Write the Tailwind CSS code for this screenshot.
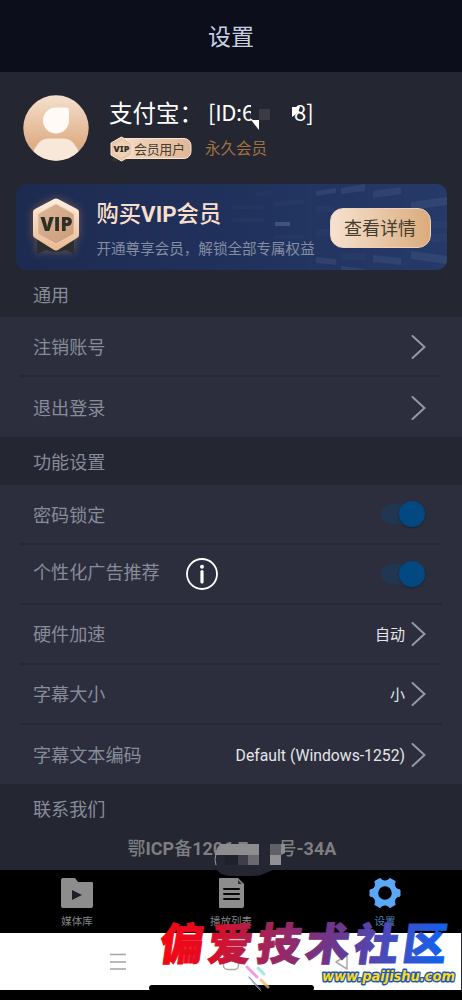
<!DOCTYPE html>
<html lang="zh-CN">
<head>
<meta charset="utf-8">
<meta name="viewport" content="width=device-width, initial-scale=1">
<title>设置</title>
<script src="https://cdn.jsdelivr.net/npm/@tailwindcss/browser@4"></script>
</head>
<body class="bg-black">
<div class="relative flex h-[1000px] w-[462px] flex-col overflow-hidden bg-[#242632] font-['Roboto','Noto_Sans_CJK_SC',sans-serif] text-[18.100px] text-[#868c99]">
  <header class="flex h-[72px] shrink-0 items-center justify-center bg-[#0c0e1b] pt-[4px] text-[23px] text-[#c9cee0]">设置</header>

  <section class="flex h-[112px] shrink-0 pl-[23px] pt-[23px]">
    <svg class="h-[66px] w-[66px] shrink-0" viewBox="0 0 66 66">
      <defs>
        <linearGradient id="av" x1="0" y1="0" x2="0" y2="1"><stop offset="0" stop-color="#f5e0cd"/><stop offset=".75" stop-color="#dfae87"/><stop offset="1" stop-color="#dfae87"/></linearGradient>
        <clipPath id="avc"><circle cx="33" cy="33" r="32.7"/></clipPath>
      </defs>
      <circle cx="33" cy="33" r="32.7" fill="url(#av)"/>
      <path d="M33 12.500h10q3 0 3 3v10A13 13 0 1 1 33 12.500Z" fill="#fffaf5"/>
      <path clip-path="url(#avc)" d="M10 66V58Q15 43.500 26 43.500H40Q51 43.500 56 58V66Z" fill="#f8e8da"/>
    </svg>
    <div class="flex flex-col pl-[20px]">
      <div class="flex h-[38px] items-center whitespace-nowrap text-white">
        <span class="w-[99px] pt-[1px] text-[23.500px]">支付宝：</span>
        <span class="w-[43px] pb-[5px] font-['Noto_Sans_CJK_SC',sans-serif] text-[22px] tracking-[-0.3px]">[ID:6</span>
        <svg class="relative h-[34px] w-[43px] shrink-0" viewBox="0 0 43 34">
          <path d="M0 5h6v17H0z" fill="#242632"/><path d="M0 23h8v10Z" fill="#fff"/><path d="M8 12h11v11H8Z" fill="#3a3b45"/>
        </svg>
        <span class="relative pb-[5px] font-['Noto_Sans_CJK_SC',sans-serif] text-[22px]">8]<span class="absolute left-[-2px] top-[12px] h-[10px] w-[8px] bg-white [clip-path:polygon(0_0,100%_0,70%_60%,0_100%)]"></span></span>
      </div>
      <div class="flex h-[32px] items-center text-[15px]">
        <svg class="h-[26px] w-[84px]" viewBox="0 0 84 26">
          <defs><linearGradient id="gold" x1="0" y1="0" x2="1" y2="0"><stop offset="0" stop-color="#f6ddc7"/><stop offset="1" stop-color="#dfb796"/></linearGradient></defs>
          <path d="M4 20v6l5-2 5 2 5-2v-4Z" fill="#353426"/>
          <rect x="5" y="2.500" width="77" height="20" rx="7" fill="url(#gold)" stroke="#fae5d3"/>
          <path d="M12.500 1 23 7v12L12.500 25 2 19V7Z" fill="#e8c6aa" stroke="#fae9dc" stroke-linejoin="round"/>
          <path d="M12.500 4 20.500 8.500v9L12.500 22 4.500 17.500v-9Z" fill="#eed1b9"/>
          <text x="4.500" y="16" font-size="9.500" font-weight="900" fill="#343026" textLength="16" lengthAdjust="spacingAndGlyphs" font-family="Noto Sans, sans-serif">VIP</text>
          <text x="25" y="18" font-size="13" fill="#493f32" textLength="51" font-family="Noto Sans CJK SC, sans-serif">会员用户</text>
        </svg>
        <span class="pl-[12px] pt-[1px] text-[15.500px] text-[#9e7143]">永久会员</span>
      </div>
    </div>
  </section>

  <section class="relative ml-[15.500px] flex h-[86px] w-[431px] shrink-0 items-center overflow-hidden rounded-[10px] bg-gradient-to-r from-[#1e2b50] via-[#20315c] to-[#263a69]">
    <svg class="absolute inset-0 h-full w-full" viewBox="0 0 431 86" fill="#7080a4">
      <path fill-opacity=".4" d="M259 38h15v4h-15z"/>
      <path fill-opacity=".17" d="M300 7l20-3v5l-20 3zM325 4l24-4v7l-24 3zM357 7l28-4v7l-28 4zM395 18l36-5v8l-36 5zM300 73l20 2v6l-20-2zM325 82l24 3v3h-24zM357 71l28 3v7l-28-3zM395 67l36 5v8l-36-5z"/>
      <path fill-opacity=".05" d="M240 8l15-2v5l-15 2zM258 18l30-3v5l-30 3zM300 22h18v6h-18zM300 45h18v7h-18zM325 69h25v7h-25zM357 56h28v7h-28zM357 24h28v5h-28zM395 37h36v7h-36zM395 50h36v8h-36zM258 51h30v4h-30zM258 64h30v5h-30zM216 21h32v4h-32zM216 34h32v4h-32z"/>
      <path stroke="#6074a5" stroke-opacity=".05" d="M295 0v86M322 0v86M353 0v86M390 0v86"/>
    </svg>
    <svg class="relative ml-[14.500px] mt-[1px] h-[62px] w-[52px] shrink-0 drop-shadow-[0_0_4px_#b27e5a88]" viewBox="0 0 52 62">
      <defs><linearGradient id="medal" x1="0" y1="0" x2="0" y2="1"><stop stop-color="#fff0df"/><stop offset="1" stop-color="#e8b98f"/></linearGradient><linearGradient id="medal2" x1="0" y1="0" x2="1" y2="1"><stop stop-color="#dcb697"/><stop offset="1" stop-color="#c99c7b"/></linearGradient></defs>
      <path d="M7 43v14l9-4 8 2h4l8-2 8 4V43Z" fill="#2b2e2d"/>
      <path d="M24 2q2-1 4 0l19 10q2 1 2 3v23q0 2-2 3L28 53q-2 1-4 0L5 41q-2-1-2-3V15q0-2 2-3Z" fill="url(#medal)"/>
      <path d="M26 7 44 17v20L26 47 8 37V17Z" fill="url(#medal2)" stroke="#edcaae"/>
      <text x="10.500" y="34" font-family="Open Sans, sans-serif" font-size="19" font-weight="800" textLength="32" lengthAdjust="spacingAndGlyphs" fill="#2e2f26">VIP</text>
    </svg>
    <div class="relative ml-[14.500px] flex flex-col whitespace-nowrap pt-[9px]">
      <span class="h-[37px] text-[22.300px] font-medium leading-[30px] text-[#f8dfcb]">购买<b>VIP</b>会员</span>
      <span class="h-[28px] text-[14.550px] leading-[28px] text-[#858da2]">开通尊享会员，解锁全部专属权益</span>
    </div>
    <div class="absolute left-[314px] top-[24px] flex h-[40px] w-[101px] items-center justify-center rounded-[13px] border border-[#edd2b9] bg-gradient-to-r from-[#f6e2d0] to-[#dbac7c] pt-[1px] text-[18px] text-[#443d30]">查看详情</div>
  </section>

  <h2 class="flex h-[47px] shrink-0 items-center px-[33px] pt-[5px]">通用</h2>
  <section class="flex h-[120px] shrink-0 flex-col bg-[#2c2e3d]">
    <div class="mx-[20px] flex h-[60px] items-center border-b-2 border-[#262836] pl-[13px] pr-[16px] pt-[2px]"><span class="flex-1 pt-[2px]">注销账号</span><svg class="h-[26px] w-[15px]" viewBox="0 0 15 26" fill="none" stroke="#9599a6" stroke-width="2" stroke-linecap="round"><path d="M1.500 2 13.500 13 1.500 24"/></svg></div>
    <div class="mx-[20px] flex h-[60px] items-center pl-[13px] pr-[16px] pt-[2px]"><span class="flex-1 pt-[2px]">退出登录</span><svg class="h-[26px] w-[15px]" viewBox="0 0 15 26" fill="none" stroke="#9599a6" stroke-width="2" stroke-linecap="round"><path d="M1.500 2 13.500 13 1.500 24"/></svg></div>
  </section>
  <h2 class="flex h-[48px] shrink-0 items-center px-[33px] pt-[4px]">功能设置</h2>
  <section class="flex h-[299px] shrink-0 flex-col bg-[#2c2e3d]">
    <div class="mx-[20px] flex h-[60px] shrink-0 items-center border-b-2 border-[#262836] pl-[13px] pr-[17px]">
      <span class="flex-1 pt-[3px]">密码锁定</span>
      <span class="flex h-[20px] w-[44px] items-center justify-end rounded-full bg-[#203651]"><span class="h-[26px] w-[26px] shrink-0 rounded-full bg-[#034981] shadow-[0_1px_2px_#171b2899]"></span></span>
    </div>
    <div class="mx-[20px] flex h-[60px] shrink-0 items-center border-b-2 border-[#262836] pl-[13px] pr-[17px]">
      <span class="pb-[3px]">个性化广告推荐</span>
      <svg class="ml-[25px] h-[34px] w-[34px]" viewBox="0 0 34 34"><circle cx="17" cy="17" r="15" fill="none" stroke="#fff" stroke-width="1.800"/><circle cx="17" cy="9.800" r="2" fill="#fff"/><path d="M17 14.500V25" stroke="#fff" stroke-width="3.200" stroke-linecap="round"/></svg>
      <span class="ml-auto flex h-[20px] w-[44px] items-center justify-end rounded-full bg-[#203651]"><span class="h-[26px] w-[26px] shrink-0 rounded-full bg-[#034981] shadow-[0_1px_2px_#171b2899]"></span></span>
    </div>
    <div class="mx-[20px] flex h-[60px] shrink-0 items-center border-b-2 border-[#262836] pl-[13px] pr-[16px]"><span class="flex-1 pt-[2px]">硬件加速</span><span class="mr-[6px] pt-[2px] text-[15px] text-[#e4e5e8]">自动</span><svg class="h-[26px] w-[15px]" viewBox="0 0 15 26" fill="none" stroke="#9599a6" stroke-width="2" stroke-linecap="round"><path d="M1.500 2 13.500 13 1.500 24"/></svg></div>
    <div class="mx-[20px] flex h-[60px] shrink-0 items-center border-b-2 border-[#262836] pl-[13px] pr-[16px]"><span class="flex-1 pt-[2px]">字幕大小</span><span class="mr-[6px] pt-[2px] text-[15px] text-[#e4e5e8]">小</span><svg class="h-[26px] w-[15px]" viewBox="0 0 15 26" fill="none" stroke="#9599a6" stroke-width="2" stroke-linecap="round"><path d="M1.500 2 13.500 13 1.500 24"/></svg></div>
    <div class="mx-[20px] flex h-[60px] shrink-0 items-center pl-[13px] pr-[16px]"><span class="flex-1 pt-[2px]">字幕文本编码</span><span class="mr-[6px] pt-[2px] text-[15.750px] text-[#e4e5e8]">Default (Windows-1252)</span><svg class="h-[26px] w-[15px]" viewBox="0 0 15 26" fill="none" stroke="#9599a6" stroke-width="2" stroke-linecap="round"><path d="M1.500 2 13.500 13 1.500 24"/></svg></div>
  </section>
  <section class="h-[86px] shrink-0">
    <h2 class="flex h-[48px] items-center px-[33px] pt-[4px]">联系我们</h2>
    <div class="relative flex h-[32px] items-center whitespace-nowrap pl-[127.500px] pt-[1px] text-[18px] font-medium text-[#7e7e80]">
      <span class="w-[151px]">鄂<b>ICP</b>备<b>1206 7</b></span><span>号<b>-34A</b></span>
      <svg class="absolute left-[213px] top-[11px] h-[36px] w-[75px]" viewBox="0 0 75 36">
        <path d="M2 12h54v9H2z" fill="#242632"/>
        <path d="M8 1h38v11H2Q3 4 8 1Z" fill="#8d8d8f"/><path d="M3 11Q1 16 3 22" stroke="#999" fill="none"/>
        <path d="M12 12h13v10H12z" fill="#20212b"/><path d="M25 12h10v10H25z" fill="#3d3e48"/><path d="M35 12h11v10H35z" fill="#69696f"/>
        <path d="M46 1h11v21H46z" fill="#242632"/><path d="M57 1h11v11H57z" fill="#5f606a"/><path d="M57 12h11v10H57z" fill="#919194"/><path d="M68 1h4v9l-4 2z" fill="#8d8d8f"/>
      </svg>
    </div>
  </section>

  <nav class="relative flex h-[63px] shrink-0 justify-between bg-black text-[10.500px] leading-[16px] text-[#858585]">
    <div class="absolute left-[217px] top-0 h-[6px] w-[56px] bg-[#242632] [clip-path:polygon(0_0,100%_0,76%_90%,60%_100%,22%_100%,8%_70%)]"></div>
    <div class="flex w-[154px] flex-col items-center gap-[5px] pt-[7px]">
      <svg class="h-[32px] w-[34px]" viewBox="0 0 34 32"><path d="M3 1h12l3 4h14q1 0 1 1v23q0 2-2 2H3q-2 0-2-2V3q0-2 2-2Z" fill="#8d8d8d"/><path d="M12 13v10l10-5Z" fill="#1d1e29"/></svg><span>媒体库</span>
    </div>
    <div class="flex w-[154px] flex-col items-center gap-[5px] pt-[7px]">
      <svg class="relative h-[32px] w-[27px]" viewBox="0 0 27 32"><path d="M2 1h18l6 6v22q0 2-2 2H2q-1 0-1-1V2q0-1 1-1Z" fill="#8d8d8d"/><path d="M20 3l4 4h-4Z" fill="#333"/><path d="M6 12h15M6 17h15M6 22h15" stroke="#080808" stroke-width="2" stroke-linecap="round"/></svg><span>播放列表</span>
    </div>
    <div class="flex w-[154px] flex-col items-center gap-[5px] pt-[7px] text-[#4c83b9]">
      <svg class="h-[32px] w-[32px]" viewBox="-16 -16 32 32">
        <circle r="9.300" fill="none" stroke="#5ba9f6" stroke-width="5"/>
        <g fill="#5ba9f6" stroke="#5ba9f6" stroke-width="1" stroke-linejoin="round">
          <path id="tooth" d="M9.500-6.500 12-4 15-3V3L12 4 9.500 6.500Z"/>
          <use href="#tooth" transform="rotate(60)"/><use href="#tooth" transform="rotate(120)"/><use href="#tooth" transform="rotate(180)"/><use href="#tooth" transform="rotate(240)"/><use href="#tooth" transform="rotate(300)"/>
        </g>
      </svg><span>设置</span>
    </div>
  </nav>
  <div class="flex h-[57px] w-[461px] shrink-0 items-center justify-between bg-white pl-[109px] pr-[113px]">
    <svg class="h-[18px] w-[18px]" viewBox="0 0 18 18" stroke="#a4a4a4" stroke-width="1.500"><path d="M1 1.500h16M1 9h16M1 16h16"/></svg>
    <svg class="h-[18px] w-[18px]" viewBox="0 0 18 18" fill="none" stroke="#aaa" stroke-width="1.500"><rect x="1.500" y="1.500" width="15" height="15" rx="4"/></svg>
    <svg class="h-[18px] w-[14px]" viewBox="0 0 14 18" fill="none" stroke="#aaa" stroke-width="1.500"><path d="M13 2v14L2 9Z" stroke-linejoin="round"/></svg>
  </div>
  <div class="h-[10px] shrink-0 bg-black"></div>
  <div class="absolute left-[149px] top-[985px] h-[6px] w-[165px] rounded-full bg-black"></div>

  <svg class="absolute left-[150px] top-[910px] h-[90px] w-[312px] overflow-visible" viewBox="0 0 312 90">
    <defs><linearGradient id="mark" gradientUnits="userSpaceOnUse" x1="10" y1="0" x2="296" y2="0"><stop offset="0" stop-color="#f80612"/><stop offset=".17" stop-color="#e30b20"/><stop offset=".35" stop-color="#ad2050"/><stop offset=".6" stop-color="#713587"/><stop offset=".8" stop-color="#4c49b8"/><stop offset="1" stop-color="#1460ed"/></linearGradient></defs>
    <g stroke-linecap="round" stroke-opacity=".75"><path d="M97 57 107 67" stroke="#ef75e3" stroke-width="3"/><path d="M108 58 114 64" stroke="#78e6d8" stroke-width="3"/><path d="M111 70 118 77" stroke="#f3b767" stroke-width="3"/><path d="M99 67 110 79" stroke="#547fe0" stroke-width="1.200"/><path d="M102 72 111 81" stroke="#bba782"/></g>
    <g transform="skewX(-8)"><text x="15" y="50" font-family="Noto Sans CJK SC, sans-serif" font-weight="900" font-size="44" textLength="287" fill="url(#mark)" stroke="url(#mark)" stroke-width="1">偏爱技术社区</text></g>
    <text x="172" y="70.500" font-family="DejaVu Sans, sans-serif" font-style="italic" font-weight="bold" font-size="14.500" textLength="133" lengthAdjust="spacingAndGlyphs" fill="#ffdc0a" stroke="#1655cf" stroke-width="2.800" stroke-linejoin="round" paint-order="stroke">www.paijishu.com</text>
  </svg>
</div>
</body>
</html>
